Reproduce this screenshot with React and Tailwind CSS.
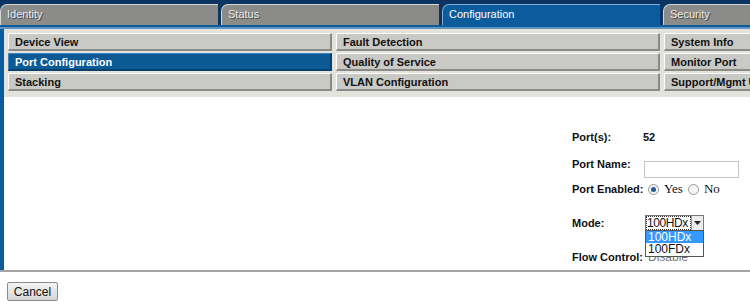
import React from 'react';

const tabs = [
    { label: 'Identity', active: false },
    { label: 'Status', active: false },
    { label: 'Configuration', active: true },
    { label: 'Security', active: false },
];

const menu = [
    ['Device View', 'Fault Detection', 'System Info'],
    ['Port Configuration', 'Quality of Service', 'Monitor Port'],
    ['Stacking', 'VLAN Configuration', 'Support/Mgmt URL'],
];

const MenuButton = ({ label, active }) => (
    <div
        className={
            active
                ? 'h-[18px] bg-[#0b5a96] text-white pl-[6px] text-[11px] font-bold leading-[16px] border-t border-l border-[#3c86c0] border-b-[2px] border-r-[2px] border-b-[#08406c] border-r-[#08406c] whitespace-nowrap overflow-hidden'
                : 'h-[18px] bg-[#c9c9c6] text-[#111] pl-[6px] text-[11px] font-bold leading-[16px] border-t border-l border-white border-b-[2px] border-r-[2px] border-b-[#8a8a86] border-r-[#8a8a86] whitespace-nowrap overflow-hidden'
        }
    >
        {label}
    </div>
);

const Radio = ({ checked }) => (
    <span className="inline-flex items-center justify-center w-[11px] h-[11px] rounded-full border border-[#9a9a9a] bg-[#f4f4f4]">
        {checked && <span className="w-[5px] h-[5px] rounded-full bg-[#2a5a90]" />}
    </span>
);

export default function App() {
    return (
        <div className="w-[750px] h-[305px] bg-white overflow-hidden font-['Liberation_Sans',Arial,sans-serif]">
            {/* tab strip */}
            <div className="bg-[#0a3563] pt-[4px] flex gap-[3px] h-[25px]">
                {tabs.map(tab => (
                    <div
                        key={tab.label}
                        className={
                            tab.active
                                ? 'w-[218px] shrink-0 rounded-tl-[7px] bg-[#0b5c9c] border-t border-l border-[#7fb0d8] pl-[6px] text-[11px] text-white leading-[18px]'
                                : 'w-[218px] shrink-0 rounded-tl-[7px] bg-[#8b8b89] border-t border-l border-[#d4d4d0] pl-[6px] text-[11px] text-[#eeeeee] leading-[18px] [text-shadow:1px_1px_0_#444]'
                        }
                    >
                        {tab.label}
                    </div>
                ))}
            </div>
            <div className="h-[2px] bg-[#0b5c9c]" />
            <div className="h-[2px] bg-[#5f93c0]" />

            <div className="border-l-4 border-[#0b5c9c]">
                {/* sub menu */}
                <div className="bg-[#e3e3dc] pt-[4px] pb-[6px] pl-[4px] grid grid-cols-[324px_324px_100px] gap-x-[4px] gap-y-[2px]">
                    {menu.map((row, r) =>
                        row.map((label, c) => (
                            <MenuButton key={label} label={label} active={r === 1 && c === 0} />
                        ))
                    )}
                </div>

                {/* form area */}
                <div className="h-[173px] relative pt-[33px] pl-[568px] text-[11px] text-[#111]">
                    <div className="flex items-center h-[14px]">
                        <span className="w-[71px] font-bold">Port(s):</span>
                        <span className="font-bold">52</span>
                    </div>
                    <div className="flex items-start mt-[17px] h-[17px]">
                        <span className="w-[72px] font-bold leading-[14px] -mt-[4px]">Port Name:</span>
                        <div className="w-[95px] h-[17px] border border-[#c4c4c4] bg-white" />
                    </div>
                    <div className="flex items-center mt-[3px] h-[16px]">
                        <span className="w-[76px] font-bold whitespace-nowrap">Port Enabled:</span>
                        <Radio checked />
                        <span className="ml-[5px] text-[13px] font-['Liberation_Serif',serif]">Yes</span>
                        <span className="ml-[5px] flex"><Radio /></span>
                        <span className="ml-[5px] text-[13px] font-['Liberation_Serif',serif]">No</span>
                    </div>
                    <div className="flex items-center mt-[18px] h-[16px]">
                        <span className="w-[73px] font-bold">Mode:</span>
                        <div className="flex h-[16px] border border-[#7a7a7a] bg-white">
                            <span className="w-[45px] text-[12px] tracking-[-0.4px] leading-[12px] border border-dotted border-[#333] whitespace-nowrap overflow-hidden">100HDx</span>
                            <span className="w-[12px] bg-[#ececec] border-l border-[#9a9a9a] flex items-center justify-center">
                                <svg width="7" height="4" viewBox="0 0 7 4"><path d="M0 0h7L3.5 4z" fill="#222" /></svg>
                            </span>
                        </div>
                    </div>
                    <div className="flex items-center mt-[19px] h-[14px]">
                        <span className="w-[73px] font-bold whitespace-nowrap">Flow Control:</span>
                        <span className="text-[12px] text-[#777] pl-[3px]">Disable</span>
                    </div>

                    {/* open dropdown */}
                    <div className="absolute left-[641px] top-[133px] w-[59px] border border-[#555] bg-white text-[12px] leading-[12px]">
                        <div className="bg-[#3399ff] text-white pl-[2px] h-[12px]">100HDx</div>
                        <div className="pl-[2px] h-[13px]">100FDx</div>
                    </div>
                </div>
            </div>

            <div className="h-[2px] bg-[#a4a4a4]" />
            <div className="flex pt-[10px] pl-[7px]">
                <button className="w-[51px] h-[19px] rounded-[2px] border border-[#8a8a8a] bg-gradient-to-b from-[#f4f4f4] to-[#d6d6d6] text-[12px] text-[#111] leading-[16px]">
                    Cancel
                </button>
            </div>
        </div>
    );
}
